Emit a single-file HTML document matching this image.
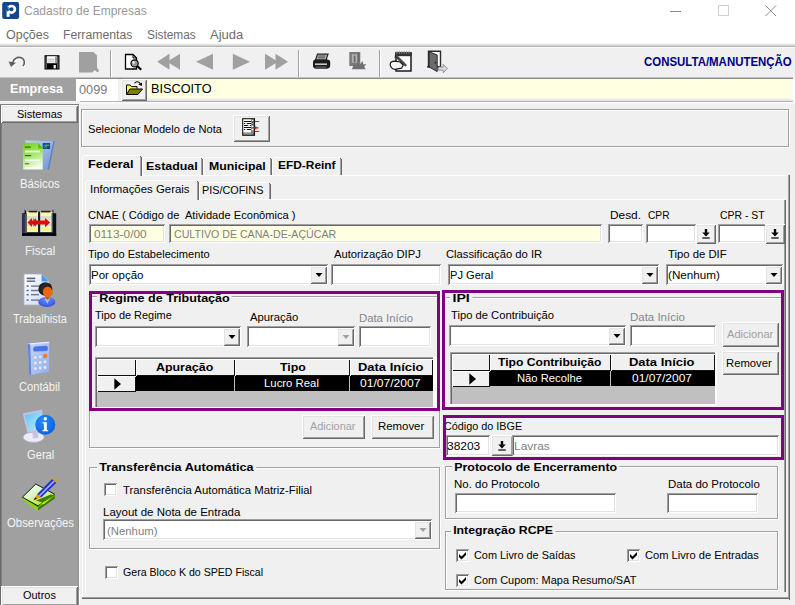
<!DOCTYPE html>
<html><head><meta charset="utf-8"><title>Cadastro de Empresas</title>
<style>
html,body{margin:0;padding:0;}
body{width:795px;height:605px;overflow:hidden;background:#f0f0f0;font-family:"Liberation Sans", sans-serif;font-size:11px;position:relative;}
#w{position:absolute;left:0;top:0;width:795px;height:605px;overflow:hidden;}
#w div,#w span,#w svg{position:absolute;display:block;}
#w span{white-space:pre;line-height:normal;transform-origin:0 0;}
</style></head><body><div id="w">
<div style="left:0px;top:0px;width:795px;height:45px;background:#fff"></div>
<svg style="left:2px;top:2px" width="18" height="18" viewBox="0 0 18 18"><rect x=".2" y=".1" width="16.900" height="17" rx="2" fill="#12488a"/><circle cx="9.600" cy="7.300" r="3.300" fill="none" stroke="#fff" stroke-width="2.700"/><rect x="4.600" y="7.600" width="3" height="7.200" fill="#fff"/><path d="M2.500 1.500L9 7.500 5 9.500z" fill="#12488a"/><path d="M4.400 3.200c1.200.6 2.600 2 3.200 4l-1.600.4c-.2-1.800-.8-3.200-1.600-4.400z" fill="#35a7f0"/></svg>
<span style="left:24.43px;top:3.03px;font-size:13px;color:#999;transform:scaleX(0.923);">Cadastro de Empresas</span>
<div style="left:670px;top:11px;width:11px;height:1px;background:#8a8a8a"></div>
<div style="left:718px;top:5px;width:11px;height:11px;border:1px solid #d0d0d0;box-sizing:border-box"></div>
<svg style="left:765px;top:5px" width="12" height="12" viewBox="0 0 12 12"><path d="M0.5 0.5L11 11M11 0.5L0.5 11" stroke="#8a8a8a" stroke-width="1" fill="none"/></svg>
<span style="left:6.47px;top:27.55px;font-size:12px;color:#6d6d6d;transform:scaleX(1.039);">Opções</span>
<span style="left:63.00px;top:27.55px;font-size:12px;color:#6d6d6d;transform:scaleX(1.019);">Ferramentas</span>
<span style="left:146.75px;top:27.55px;font-size:12px;color:#6d6d6d;transform:scaleX(0.988);">Sistemas</span>
<span style="left:209.86px;top:27.55px;font-size:12px;color:#6d6d6d;transform:scaleX(1.084);">Ajuda</span>
<div style="left:0px;top:43px;width:795px;height:1px;background:#f6f6f6"></div>
<div style="left:0px;top:44px;width:795px;height:1px;background:#e6e6e6"></div>
<div style="left:0px;top:45px;width:795px;height:1px;background:#d0d0d0"></div>
<div style="left:0px;top:46px;width:795px;height:1px;background:#b4b4b4"></div>
<div style="left:0px;top:47px;width:795px;height:1px;background:#fafafa"></div>
<div style="left:0px;top:77px;width:795px;height:1px;background:#c4c4c4"></div>
<div style="left:0px;top:78px;width:795px;height:1px;background:#8c8c8c"></div>
<div style="left:110px;top:50px;width:1px;height:27px;background:#a0a0a0"></div>
<div style="left:111px;top:50px;width:1px;height:27px;background:#fff"></div>
<div style="left:298px;top:50px;width:1px;height:27px;background:#a0a0a0"></div>
<div style="left:299px;top:50px;width:1px;height:27px;background:#fff"></div>
<div style="left:379px;top:50px;width:1px;height:27px;background:#a0a0a0"></div>
<div style="left:380px;top:50px;width:1px;height:27px;background:#fff"></div>
<span style="left:643.61px;top:54.95px;font-size:12px;color:#000080;font-weight:bold;transform:scaleX(0.954);">CONSULTA/MANUTENÇÃO</span>
<div style="left:0px;top:78px;width:77px;height:23px;background:#a0a0a0"></div>
<span style="left:9.75px;top:82.09px;font-size:12.5px;color:#fff;font-weight:bold;transform:scaleX(1.005);">Empresa</span>
<div style="left:76px;top:79px;width:42px;height:22px;background:#fff"></div>
<span style="left:78.54px;top:81.63px;font-size:13px;color:#7b7b7b;transform:scaleX(0.980);">0099</span>
<div style="left:121px;top:79px;width:26px;height:22px;background:#f0f0f0;box-shadow:inset 1px 1px 0 #ffffff,inset -1px -1px 0 #696969,inset 2px 2px 0 #e3e3e3,inset -2px -2px 0 #a0a0a0"></div>
<div style="left:147px;top:79px;width:644px;height:19px;background:#ffffe1"></div>
<div style="left:147px;top:98px;width:646px;height:1px;background:#f2f2ea"></div>
<div style="left:147px;top:99px;width:646px;height:1px;background:#ececec"></div>
<div style="left:147px;top:100px;width:646px;height:1px;background:#e4e4e4"></div>
<div style="left:791px;top:79px;width:2px;height:21px;background:#fafafa"></div>
<div style="left:80px;top:101px;width:715px;height:1px;background:#b4b4b4"></div>
<div style="left:80px;top:102px;width:715px;height:1px;background:#fafafa"></div>
<div style="left:80px;top:103px;width:715px;height:1px;background:#f6f6f6"></div>
<div style="left:793px;top:77px;width:2px;height:25px;background:#fff"></div>
<span style="left:151.00px;top:81.33px;font-size:13px;color:#000;transform:scaleX(0.978);">BISCOITO</span>
<div style="left:0px;top:104px;width:1px;height:501px;background:#696969"></div>
<div style="left:1px;top:104px;width:1px;height:501px;background:#808080"></div>
<div style="left:2px;top:104px;width:76px;height:501px;background:#a0a0a0"></div>
<div style="left:78px;top:104px;width:1px;height:501px;background:#909090"></div>
<div style="left:79px;top:104px;width:1px;height:501px;background:#fff"></div>
<div style="left:0px;top:104px;width:79px;height:1px;background:#808080"></div>
<div style="left:1px;top:105px;width:77px;height:18px;background:#f0f0f0;box-shadow:inset 1px 1px 0 #ffffff,inset -1px -1px 0 #696969,inset 2px 2px 0 #e3e3e3,inset -2px -2px 0 #a0a0a0"></div>
<span style="left:16.84px;top:107.81px;font-size:11.5px;color:#000;transform:scaleX(0.958);">Sistemas</span>
<div style="left:1px;top:586px;width:77px;height:20px;background:#f0f0f0;box-shadow:inset 1px 1px 0 #ffffff,inset -1px -1px 0 #696969,inset 2px 2px 0 #e3e3e3,inset -2px -2px 0 #a0a0a0"></div>
<span style="left:23.34px;top:589.11px;font-size:11.5px;color:#000;transform:scaleX(0.952);">Outros</span>
<span style="left:20.00px;top:176.95px;font-size:12px;color:#f4f4f4;transform:scaleX(0.944);">Básicos</span>
<span style="left:24.80px;top:244.45px;font-size:12px;color:#f4f4f4;transform:scaleX(0.967);">Fiscal</span>
<span style="left:12.87px;top:312.35px;font-size:12px;color:#f4f4f4;transform:scaleX(0.916);">Trabalhista</span>
<span style="left:19.30px;top:380.25px;font-size:12px;color:#f4f4f4;transform:scaleX(0.930);">Contábil</span>
<span style="left:26.89px;top:448.25px;font-size:12px;color:#f4f4f4;transform:scaleX(0.930);">Geral</span>
<span style="left:6.51px;top:515.65px;font-size:12px;color:#f4f4f4;transform:scaleX(0.948);">Observações</span>
<div style="left:81px;top:109px;width:708px;height:38px;border:1px solid #a0a0a0;box-shadow:inset 1px 1px 0 #ffffff,1px 1px 0 #ffffff;box-sizing:border-box"></div>
<span style="left:88.13px;top:123.07px;font-size:11px;color:#000;transform:scaleX(1.009);">Selecionar Modelo de Nota</span>
<div style="left:233px;top:115px;width:37px;height:27px;background:#f0f0f0;box-shadow:inset 1px 1px 0 #ffffff,inset -1px -1px 0 #696969,inset 2px 2px 0 #e3e3e3,inset -2px -2px 0 #a0a0a0"></div>
<div style="left:82px;top:175px;width:707px;height:1px;background:#ffffff"></div>
<div style="left:82px;top:175px;width:1px;height:423px;background:#ffffff"></div>
<div style="left:788px;top:175px;width:1px;height:424px;background:#a0a0a0"></div>
<div style="left:789px;top:175px;width:1px;height:425px;background:#696969"></div>
<div style="left:82px;top:597px;width:707px;height:1px;background:#a0a0a0"></div>
<div style="left:82px;top:598px;width:708px;height:1px;background:#696969"></div>
<div style="left:142px;top:159px;width:1px;height:16px;background:#ffffff"></div>
<div style="left:144px;top:157px;width:57px;height:1px;background:#ffffff"></div>
<div style="left:143px;top:158px;width:1px;height:1px;background:#ffffff"></div>
<div style="left:201px;top:159px;width:1px;height:16px;background:#a0a0a0"></div>
<div style="left:202px;top:159px;width:1px;height:16px;background:#696969"></div>
<div style="left:201px;top:158px;width:1px;height:1px;background:#696969"></div>
<div style="left:203px;top:159px;width:1px;height:16px;background:#ffffff"></div>
<div style="left:205px;top:157px;width:65px;height:1px;background:#ffffff"></div>
<div style="left:204px;top:158px;width:1px;height:1px;background:#ffffff"></div>
<div style="left:270px;top:159px;width:1px;height:16px;background:#a0a0a0"></div>
<div style="left:271px;top:159px;width:1px;height:16px;background:#696969"></div>
<div style="left:270px;top:158px;width:1px;height:1px;background:#696969"></div>
<div style="left:272px;top:159px;width:1px;height:16px;background:#ffffff"></div>
<div style="left:274px;top:157px;width:66px;height:1px;background:#ffffff"></div>
<div style="left:273px;top:158px;width:1px;height:1px;background:#ffffff"></div>
<div style="left:340px;top:159px;width:1px;height:16px;background:#a0a0a0"></div>
<div style="left:341px;top:159px;width:1px;height:16px;background:#696969"></div>
<div style="left:340px;top:158px;width:1px;height:1px;background:#696969"></div>
<div style="left:82px;top:157px;width:1px;height:19px;background:#ffffff"></div>
<div style="left:84px;top:155px;width:56px;height:1px;background:#ffffff"></div>
<div style="left:83px;top:156px;width:1px;height:1px;background:#ffffff"></div>
<div style="left:140px;top:157px;width:1px;height:19px;background:#a0a0a0"></div>
<div style="left:141px;top:157px;width:1px;height:19px;background:#696969"></div>
<div style="left:140px;top:156px;width:1px;height:1px;background:#696969"></div>
<div style="left:83px;top:175px;width:57px;height:2px;background:#f0f0f0"></div>
<span style="left:88.45px;top:157.59px;font-size:11.3px;color:#000;font-weight:bold;transform:scaleX(1.131);">Federal</span>
<span style="left:145.96px;top:159.59px;font-size:11.3px;color:#000;font-weight:bold;transform:scaleX(1.098);">Estadual</span>
<span style="left:209.27px;top:159.59px;font-size:11.3px;color:#000;font-weight:bold;transform:scaleX(1.088);">Municipal</span>
<span style="left:277.60px;top:159.29px;font-size:11.3px;color:#000;font-weight:bold;transform:scaleX(1.054);">EFD-Reinf</span>
<div style="left:85px;top:199px;width:700px;height:1px;background:#ffffff"></div>
<div style="left:85px;top:199px;width:1px;height:393px;background:#ffffff"></div>
<div style="left:784px;top:200px;width:1px;height:392px;background:#a0a0a0"></div>
<div style="left:785px;top:200px;width:1px;height:392px;background:#696969"></div>
<div style="left:199px;top:184px;width:1px;height:15px;background:#ffffff"></div>
<div style="left:201px;top:182px;width:68px;height:1px;background:#ffffff"></div>
<div style="left:200px;top:183px;width:1px;height:1px;background:#ffffff"></div>
<div style="left:269px;top:184px;width:1px;height:15px;background:#a0a0a0"></div>
<div style="left:270px;top:184px;width:1px;height:15px;background:#696969"></div>
<div style="left:269px;top:183px;width:1px;height:1px;background:#696969"></div>
<div style="left:85px;top:182px;width:1px;height:18px;background:#ffffff"></div>
<div style="left:87px;top:180px;width:110px;height:1px;background:#ffffff"></div>
<div style="left:86px;top:181px;width:1px;height:1px;background:#ffffff"></div>
<div style="left:197px;top:182px;width:1px;height:18px;background:#a0a0a0"></div>
<div style="left:198px;top:182px;width:1px;height:18px;background:#696969"></div>
<div style="left:197px;top:181px;width:1px;height:1px;background:#696969"></div>
<div style="left:86px;top:199px;width:111px;height:2px;background:#f0f0f0"></div>
<span style="left:90.46px;top:182.67px;font-size:11px;color:#000;transform:scaleX(1.037);">Informações Gerais</span>
<span style="left:202.02px;top:184.47px;font-size:11px;color:#000;transform:scaleX(0.984);">PIS/COFINS</span>
<span style="left:88.27px;top:208.87px;font-size:11px;color:#000;transform:scaleX(1.010);">CNAE ( Código de  Atividade Econômica )</span>
<div style="left:89px;top:224px;width:76px;height:19px;background:#ffffe1;box-shadow:inset 1px 1px 0 #a0a0a0,inset -1px -1px 0 #ffffff,inset 2px 2px 0 #696969,inset -2px -2px 0 #e3e3e3"></div>
<span style="left:93.53px;top:227.67px;font-size:11px;color:#808080;transform:scaleX(1.081);">0113-0/00</span>
<div style="left:169px;top:224px;width:433px;height:19px;background:#ffffe1;box-shadow:inset 1px 1px 0 #a0a0a0,inset -1px -1px 0 #ffffff,inset 2px 2px 0 #696969,inset -2px -2px 0 #e3e3e3"></div>
<span style="left:173.90px;top:227.67px;font-size:11px;color:#808080;transform:scaleX(0.966);">CULTIVO DE CANA-DE-AÇÚCAR</span>
<span style="left:609.60px;top:208.87px;font-size:11px;color:#000;transform:scaleX(1.078);">Desd.</span>
<span style="left:648.13px;top:208.87px;font-size:11px;color:#000;transform:scaleX(0.927);">CPR</span>
<span style="left:720.31px;top:208.87px;font-size:11px;color:#000;transform:scaleX(0.949);">CPR - ST</span>
<div style="left:608px;top:224px;width:35px;height:19px;background:#fff;box-shadow:inset 1px 1px 0 #a0a0a0,inset -1px -1px 0 #ffffff,inset 2px 2px 0 #696969,inset -2px -2px 0 #e3e3e3"></div>
<div style="left:646px;top:224px;width:50px;height:19px;background:#fff;box-shadow:inset 1px 1px 0 #a0a0a0,inset -1px -1px 0 #ffffff,inset 2px 2px 0 #696969,inset -2px -2px 0 #e3e3e3"></div>
<div style="left:696px;top:224px;width:20px;height:20px;background:#f0f0f0;box-shadow:inset 1px 1px 0 #ffffff,inset -1px -1px 0 #696969,inset 2px 2px 0 #e3e3e3,inset -2px -2px 0 #a0a0a0"></div>
<div style="left:718px;top:224px;width:48px;height:19px;background:#fff;box-shadow:inset 1px 1px 0 #a0a0a0,inset -1px -1px 0 #ffffff,inset 2px 2px 0 #696969,inset -2px -2px 0 #e3e3e3"></div>
<div style="left:765px;top:224px;width:20px;height:20px;background:#f0f0f0;box-shadow:inset 1px 1px 0 #ffffff,inset -1px -1px 0 #696969,inset 2px 2px 0 #e3e3e3,inset -2px -2px 0 #a0a0a0"></div>
<svg style="left:701px;top:227.5px" width="10" height="12" viewBox="0 0 10 12"><path d="M3.800 1h2.400v3.600h2.500L5 8.400 1.300 4.600h2.500z" fill="#000"/><rect x="1.300" y="9.400" width="7.400" height="1.200" fill="#000"/></svg>
<svg style="left:770px;top:227.5px" width="10" height="12" viewBox="0 0 10 12"><path d="M3.800 1h2.400v3.600h2.500L5 8.400 1.300 4.600h2.500z" fill="#000"/><rect x="1.300" y="9.400" width="7.400" height="1.200" fill="#000"/></svg>
<span style="left:88.44px;top:247.77px;font-size:11px;color:#000;transform:scaleX(1.008);">Tipo do Estabelecimento</span>
<span style="left:333.86px;top:247.77px;font-size:11px;color:#000;transform:scaleX(1.021);">Autorização DIPJ</span>
<span style="left:446.47px;top:247.77px;font-size:11px;color:#000;transform:scaleX(1.022);">Classificação do IR</span>
<span style="left:667.64px;top:247.87px;font-size:11px;color:#000;transform:scaleX(1.028);">Tipo de DIF</span>
<div style="left:89px;top:264px;width:239px;height:21px;background:#fff;box-shadow:inset 1px 1px 0 #a0a0a0,inset -1px -1px 0 #ffffff,inset 2px 2px 0 #696969,inset -2px -2px 0 #e3e3e3"></div>
<div style="left:310px;top:266px;width:17px;height:18px;background:#f0f0f0;box-shadow:inset 1px 1px 0 #ffffff,inset -1px -1px 0 #696969,inset 2px 2px 0 #e3e3e3,inset -2px -2px 0 #a0a0a0"></div>
<svg style="left:310.5px;top:267.0px" width="16" height="16" viewBox="310.5 267.0 16 16"><polygon points="315.0,273.0 322.0,273.0 318.5,277.0" fill="#000"/></svg>
<span style="left:91.00px;top:269.17px;font-size:11px;color:#000;transform:scaleX(1.046);">Por opção</span>
<div style="left:331px;top:264px;width:110px;height:21px;background:#fff;box-shadow:inset 1px 1px 0 #a0a0a0,inset -1px -1px 0 #ffffff,inset 2px 2px 0 #696969,inset -2px -2px 0 #e3e3e3"></div>
<div style="left:448px;top:264px;width:211px;height:21px;background:#fff;box-shadow:inset 1px 1px 0 #a0a0a0,inset -1px -1px 0 #ffffff,inset 2px 2px 0 #696969,inset -2px -2px 0 #e3e3e3"></div>
<div style="left:641px;top:266px;width:17px;height:18px;background:#f0f0f0;box-shadow:inset 1px 1px 0 #ffffff,inset -1px -1px 0 #696969,inset 2px 2px 0 #e3e3e3,inset -2px -2px 0 #a0a0a0"></div>
<svg style="left:641.5px;top:267.0px" width="16" height="16" viewBox="641.5 267.0 16 16"><polygon points="646.0,273.0 653.0,273.0 649.5,277.0" fill="#000"/></svg>
<span style="left:450.40px;top:269.17px;font-size:11px;color:#000;transform:scaleX(1.008);">PJ Geral</span>
<div style="left:666px;top:264px;width:117px;height:21px;background:#fff;box-shadow:inset 1px 1px 0 #a0a0a0,inset -1px -1px 0 #ffffff,inset 2px 2px 0 #696969,inset -2px -2px 0 #e3e3e3"></div>
<div style="left:765px;top:266px;width:17px;height:18px;background:#f0f0f0;box-shadow:inset 1px 1px 0 #ffffff,inset -1px -1px 0 #696969,inset 2px 2px 0 #e3e3e3,inset -2px -2px 0 #a0a0a0"></div>
<svg style="left:765.5px;top:267.0px" width="16" height="16" viewBox="765.5 267.0 16 16"><polygon points="770.0,273.0 777.0,273.0 773.5,277.0" fill="#000"/></svg>
<span style="left:668.30px;top:268.87px;font-size:11px;color:#000;transform:scaleX(1.061);">(Nenhum)</span>
<div style="left:92px;top:296px;width:345px;height:1px;background:#a0a0a0"></div>
<div style="left:93px;top:297px;width:344px;height:1px;background:#ffffff"></div>
<span style="left:98.86px;top:292.19px;font-size:11.3px;color:#000;font-weight:bold;transform:scaleX(1.112);background:#f0f0f0;padding:0 2px;margin-left:-2px;">Regime de Tributação</span>
<span style="left:95.24px;top:308.87px;font-size:11px;color:#000;transform:scaleX(0.994);">Tipo de Regime</span>
<span style="left:250.36px;top:310.57px;font-size:11px;color:#000;transform:scaleX(1.026);">Apuração</span>
<span style="left:358.50px;top:312.07px;font-size:11px;color:#85858f;transform:scaleX(1.029);">Data Início</span>
<div style="left:95px;top:326px;width:146px;height:21px;background:#fff;box-shadow:inset 1px 1px 0 #a0a0a0,inset -1px -1px 0 #ffffff,inset 2px 2px 0 #696969,inset -2px -2px 0 #e3e3e3"></div>
<div style="left:223px;top:328px;width:17px;height:18px;background:#f0f0f0;box-shadow:inset 1px 1px 0 #ffffff,inset -1px -1px 0 #696969,inset 2px 2px 0 #e3e3e3,inset -2px -2px 0 #a0a0a0"></div>
<svg style="left:223.5px;top:329.0px" width="16" height="16" viewBox="223.5 329.0 16 16"><polygon points="228.0,335.0 235.0,335.0 231.5,339.0" fill="#000"/></svg>
<div style="left:247px;top:326px;width:108px;height:21px;background:#fff;box-shadow:inset 1px 1px 0 #a0a0a0,inset -1px -1px 0 #ffffff,inset 2px 2px 0 #696969,inset -2px -2px 0 #e3e3e3"></div>
<div style="left:337px;top:328px;width:17px;height:18px;background:#f0f0f0;box-shadow:inset 1px 1px 0 #ffffff,inset -1px -1px 0 #696969,inset 2px 2px 0 #e3e3e3,inset -2px -2px 0 #a0a0a0"></div>
<svg style="left:337.5px;top:329.0px" width="16" height="16" viewBox="337.5 329.0 16 16"><polygon points="342.0,335.0 349.0,335.0 345.5,339.0" fill="#a0a0a0"/></svg>
<div style="left:359px;top:326px;width:72px;height:21px;background:#fff;box-shadow:inset 1px 1px 0 #a0a0a0,inset -1px -1px 0 #ffffff,inset 2px 2px 0 #696969,inset -2px -2px 0 #e3e3e3"></div>
<div style="left:95px;top:357px;width:338px;height:50px;background:#c0c0c0"></div>
<div style="left:95px;top:357px;width:338px;height:1px;background:#a0a0a0"></div>
<div style="left:95px;top:357px;width:1px;height:50px;background:#a0a0a0"></div>
<div style="left:96px;top:358px;width:337px;height:1px;background:#696969"></div>
<div style="left:96px;top:358px;width:1px;height:49px;background:#696969"></div>
<div style="left:97px;top:359px;width:39px;height:17px;background:#f0f0f0;box-shadow:inset 1px 1px 0 #ffffff,inset -1px -1px 0 #101010"></div>
<div style="left:136px;top:359px;width:99px;height:17px;background:#f0f0f0;box-shadow:inset 1px 1px 0 #ffffff,inset -1px -1px 0 #101010"></div>
<div style="left:235px;top:359px;width:115px;height:17px;background:#f0f0f0;box-shadow:inset 1px 1px 0 #ffffff,inset -1px -1px 0 #101010"></div>
<div style="left:350px;top:359px;width:83px;height:17px;background:#f0f0f0;box-shadow:inset 1px 1px 0 #ffffff,inset -1px -1px 0 #101010"></div>
<div style="left:97px;top:376px;width:39px;height:16px;background:#f0f0f0;box-shadow:inset 1px 1px 0 #ffffff,inset -1px -1px 0 #101010"></div>
<div style="left:136px;top:376px;width:297px;height:16px;background:#000"></div>
<div style="left:234px;top:376px;width:1px;height:15px;background:#c0c0c0"></div>
<div style="left:349px;top:376px;width:1px;height:15px;background:#c0c0c0"></div>
<div style="left:136px;top:391px;width:297px;height:1px;background:#c0c0c0"></div>
<svg style="left:112.0px;top:376.7px" width="12" height="14" viewBox="0 0 12 14"><polygon points="2.300,1.200 2.300,12.800 9,7" fill="#000"/></svg>
<span style="left:156.30px;top:361.39px;font-size:11.3px;color:#000;font-weight:bold;transform:scaleX(1.098);">Apuração</span>
<span style="left:279.69px;top:361.39px;font-size:11.3px;color:#000;font-weight:bold;transform:scaleX(1.094);">Tipo</span>
<span style="left:357.94px;top:361.39px;font-size:11.3px;color:#000;font-weight:bold;transform:scaleX(1.146);">Data Início</span>
<span style="left:263.60px;top:377.47px;font-size:11px;color:#fff;transform:scaleX(1.032);">Lucro Real</span>
<span style="left:360.24px;top:377.47px;font-size:11px;color:#fff;transform:scaleX(1.099);">01/07/2007</span>
<div style="left:433px;top:357px;width:4px;height:51px;background:#fbfbfb"></div>
<div style="left:95px;top:407px;width:342px;height:1px;background:#fbfbfb"></div>
<div style="left:89px;top:291px;width:351px;height:120px;border:3px solid #800080;box-sizing:border-box"></div>
<div style="left:89px;top:411px;width:1px;height:37px;background:#a0a0a0"></div>
<div style="left:90px;top:411px;width:1px;height:36px;background:#ffffff"></div>
<div style="left:89px;top:447px;width:351px;height:1px;background:#a0a0a0"></div>
<div style="left:89px;top:448px;width:352px;height:1px;background:#ffffff"></div>
<div style="left:439px;top:411px;width:1px;height:37px;background:#a0a0a0"></div>
<div style="left:440px;top:411px;width:1px;height:38px;background:#ffffff"></div>
<div style="left:302px;top:415px;width:63px;height:24px;background:#f0f0f0;box-shadow:inset 1px 1px 0 #ffffff,inset -1px -1px 0 #696969,inset 2px 2px 0 #e3e3e3,inset -2px -2px 0 #a0a0a0"></div>
<span style="left:309.86px;top:419.87px;font-size:11px;color:#a0a0a0;transform:scaleX(0.990);">Adicionar</span>
<div style="left:371px;top:415px;width:63px;height:24px;background:#f0f0f0;box-shadow:inset 1px 1px 0 #ffffff,inset -1px -1px 0 #696969,inset 2px 2px 0 #e3e3e3,inset -2px -2px 0 #a0a0a0"></div>
<span style="left:377.80px;top:419.87px;font-size:11px;color:#000;transform:scaleX(1.036);">Remover</span>
<div style="left:446px;top:297px;width:335px;height:1px;background:#a0a0a0"></div>
<div style="left:447px;top:298px;width:334px;height:1px;background:#ffffff"></div>
<span style="left:452.00px;top:291.59px;font-size:11.3px;color:#000;font-weight:bold;transform:scaleX(1.250);background:#f0f0f0;padding:0 2px;margin-left:-2px;">IPI</span>
<span style="left:451.04px;top:308.87px;font-size:11px;color:#000;transform:scaleX(1.019);">Tipo de Contribuição</span>
<span style="left:629.70px;top:311.37px;font-size:11px;color:#85858f;transform:scaleX(1.043);">Data Início</span>
<div style="left:449px;top:325px;width:177px;height:21px;background:#fff;box-shadow:inset 1px 1px 0 #a0a0a0,inset -1px -1px 0 #ffffff,inset 2px 2px 0 #696969,inset -2px -2px 0 #e3e3e3"></div>
<div style="left:608px;top:327px;width:17px;height:18px;background:#f0f0f0;box-shadow:inset 1px 1px 0 #ffffff,inset -1px -1px 0 #696969,inset 2px 2px 0 #e3e3e3,inset -2px -2px 0 #a0a0a0"></div>
<svg style="left:608.5px;top:328.0px" width="16" height="16" viewBox="608.5 328.0 16 16"><polygon points="613.0,334.0 620.0,334.0 616.5,338.0" fill="#000"/></svg>
<div style="left:630px;top:325px;width:86px;height:21px;background:#fff;box-shadow:inset 1px 1px 0 #a0a0a0,inset -1px -1px 0 #ffffff,inset 2px 2px 0 #696969,inset -2px -2px 0 #e3e3e3"></div>
<div style="left:722px;top:322px;width:57px;height:25px;background:#f0f0f0;box-shadow:inset 1px 1px 0 #ffffff,inset -1px -1px 0 #696969,inset 2px 2px 0 #e3e3e3,inset -2px -2px 0 #a0a0a0"></div>
<span style="left:726.86px;top:328.17px;font-size:11px;color:#a0a0a0;transform:scaleX(1.010);">Adicionar</span>
<div style="left:722px;top:351px;width:57px;height:24px;background:#f0f0f0;box-shadow:inset 1px 1px 0 #ffffff,inset -1px -1px 0 #696969,inset 2px 2px 0 #e3e3e3,inset -2px -2px 0 #a0a0a0"></div>
<span style="left:726.00px;top:356.67px;font-size:11px;color:#000;transform:scaleX(1.025);">Remover</span>
<div style="left:450px;top:352px;width:265px;height:52px;background:#c0c0c0"></div>
<div style="left:450px;top:352px;width:265px;height:1px;background:#a0a0a0"></div>
<div style="left:450px;top:352px;width:1px;height:52px;background:#a0a0a0"></div>
<div style="left:451px;top:353px;width:264px;height:1px;background:#696969"></div>
<div style="left:451px;top:353px;width:1px;height:51px;background:#696969"></div>
<div style="left:452px;top:354px;width:38px;height:17px;background:#f0f0f0;box-shadow:inset 1px 1px 0 #ffffff,inset -1px -1px 0 #101010"></div>
<div style="left:490px;top:354px;width:121px;height:17px;background:#f0f0f0;box-shadow:inset 1px 1px 0 #ffffff,inset -1px -1px 0 #101010"></div>
<div style="left:611px;top:354px;width:104px;height:17px;background:#f0f0f0;box-shadow:inset 1px 1px 0 #ffffff,inset -1px -1px 0 #101010"></div>
<div style="left:452px;top:371px;width:38px;height:16px;background:#f0f0f0;box-shadow:inset 1px 1px 0 #ffffff,inset -1px -1px 0 #101010"></div>
<div style="left:490px;top:371px;width:225px;height:16px;background:#000"></div>
<div style="left:610px;top:371px;width:1px;height:15px;background:#c0c0c0"></div>
<div style="left:490px;top:386px;width:225px;height:1px;background:#c0c0c0"></div>
<svg style="left:466.5px;top:371.7px" width="12" height="14" viewBox="0 0 12 14"><polygon points="2.300,1.200 2.300,12.800 9,7" fill="#000"/></svg>
<span style="left:498.39px;top:356.39px;font-size:11.3px;color:#000;font-weight:bold;transform:scaleX(1.073);">Tipo Contribuição</span>
<span style="left:629.25px;top:356.39px;font-size:11.3px;color:#000;font-weight:bold;transform:scaleX(1.146);">Data Início</span>
<span style="left:516.50px;top:372.47px;font-size:11px;color:#fff;transform:scaleX(1.020);">Não Recolhe</span>
<span style="left:632.24px;top:372.47px;font-size:11px;color:#fff;transform:scaleX(1.089);">01/07/2007</span>
<div style="left:715px;top:352px;width:2px;height:53px;background:#fbfbfb"></div>
<div style="left:450px;top:404px;width:267px;height:2px;background:#fbfbfb"></div>
<div style="left:442px;top:290px;width:342px;height:120px;border:3px solid #800080;box-sizing:border-box"></div>
<span style="left:443.50px;top:419.57px;font-size:11px;color:#000;transform:scaleX(0.984);">Código do IBGE</span>
<div style="left:446px;top:435px;width:44px;height:21px;background:#fff;box-shadow:inset 1px 1px 0 #a0a0a0,inset -1px -1px 0 #ffffff,inset 2px 2px 0 #696969,inset -2px -2px 0 #e3e3e3"></div>
<span style="left:447.40px;top:439.67px;font-size:11px;color:#000;transform:scaleX(1.087);">38203</span>
<div style="left:491px;top:435px;width:22px;height:21px;background:#f0f0f0;box-shadow:inset 1px 1px 0 #ffffff,inset -1px -1px 0 #696969,inset 2px 2px 0 #e3e3e3,inset -2px -2px 0 #a0a0a0"></div>
<svg style="left:497px;top:439.5px" width="10" height="12" viewBox="0 0 10 12"><path d="M3.800 1h2.400v3.600h2.500L5 8.400 1.300 4.600h2.500z" fill="#000"/><rect x="1.300" y="9.400" width="7.400" height="1.200" fill="#000"/></svg>
<div style="left:512px;top:435px;width:267px;height:21px;background:#fff;box-shadow:inset 1px 1px 0 #a0a0a0,inset -1px -1px 0 #ffffff,inset 2px 2px 0 #696969,inset -2px -2px 0 #e3e3e3"></div>
<span style="left:514.00px;top:439.67px;font-size:11px;color:#808080;transform:scaleX(1.085);">Lavras</span>
<div style="left:443px;top:415px;width:341px;height:45px;border:3px solid #800080;box-sizing:border-box"></div>
<div style="left:89px;top:467px;width:351px;height:1px;background:#a0a0a0"></div>
<div style="left:90px;top:468px;width:350px;height:1px;background:#ffffff"></div>
<div style="left:89px;top:467px;width:1px;height:82px;background:#a0a0a0"></div>
<div style="left:90px;top:468px;width:1px;height:80px;background:#ffffff"></div>
<div style="left:439px;top:467px;width:1px;height:82px;background:#a0a0a0"></div>
<div style="left:440px;top:467px;width:1px;height:83px;background:#ffffff"></div>
<div style="left:89px;top:548px;width:351px;height:1px;background:#a0a0a0"></div>
<div style="left:89px;top:549px;width:352px;height:1px;background:#ffffff"></div>
<span style="left:99.00px;top:460.99px;font-size:11.3px;color:#000;font-weight:bold;transform:scaleX(1.121);background:#f0f0f0;padding:0 2px;margin-left:-2px;">Transferência Automática</span>
<div style="left:104px;top:483px;width:13px;height:13px;background:#fff;box-shadow:inset 1px 1px 0 #a0a0a0,inset -1px -1px 0 #ffffff,inset 2px 2px 0 #696969,inset -2px -2px 0 #e3e3e3"></div>
<span style="left:123.24px;top:483.67px;font-size:11px;color:#000;transform:scaleX(1.030);">Transferência Automática Matriz-Filial</span>
<span style="left:102.60px;top:505.77px;font-size:11px;color:#000;transform:scaleX(1.045);">Layout de Nota de Entrada</span>
<div style="left:103px;top:519px;width:329px;height:21px;background:#fff;box-shadow:inset 1px 1px 0 #a0a0a0,inset -1px -1px 0 #ffffff,inset 2px 2px 0 #696969,inset -2px -2px 0 #e3e3e3"></div>
<div style="left:414px;top:521px;width:17px;height:18px;background:#f0f0f0;box-shadow:inset 1px 1px 0 #ffffff,inset -1px -1px 0 #696969,inset 2px 2px 0 #e3e3e3,inset -2px -2px 0 #a0a0a0"></div>
<svg style="left:414.5px;top:522.0px" width="16" height="16" viewBox="414.5 522.0 16 16"><polygon points="419.0,528.0 426.0,528.0 422.5,532.0" fill="#a0a0a0"/></svg>
<span style="left:107.02px;top:525.37px;font-size:11px;color:#808080;transform:scaleX(1.032);">(Nenhum)</span>
<div style="left:105px;top:566px;width:13px;height:13px;background:#fff;box-shadow:inset 1px 1px 0 #a0a0a0,inset -1px -1px 0 #ffffff,inset 2px 2px 0 #696969,inset -2px -2px 0 #e3e3e3"></div>
<span style="left:123.11px;top:565.77px;font-size:11px;color:#000;transform:scaleX(0.963);">Gera Bloco K do SPED Fiscal</span>
<div style="left:445px;top:466px;width:333px;height:1px;background:#a0a0a0"></div>
<div style="left:446px;top:467px;width:332px;height:1px;background:#ffffff"></div>
<div style="left:445px;top:466px;width:1px;height:53px;background:#a0a0a0"></div>
<div style="left:446px;top:467px;width:1px;height:51px;background:#ffffff"></div>
<div style="left:777px;top:466px;width:1px;height:53px;background:#a0a0a0"></div>
<div style="left:778px;top:466px;width:1px;height:54px;background:#ffffff"></div>
<div style="left:445px;top:518px;width:333px;height:1px;background:#a0a0a0"></div>
<div style="left:445px;top:519px;width:334px;height:1px;background:#ffffff"></div>
<span style="left:453.87px;top:461.29px;font-size:11.3px;color:#000;font-weight:bold;transform:scaleX(1.100);background:#f0f0f0;padding:0 2px;margin-left:-2px;">Protocolo de Encerramento</span>
<span style="left:454.00px;top:477.87px;font-size:11px;color:#000;transform:scaleX(1.044);">No. do Protocolo</span>
<span style="left:667.50px;top:477.87px;font-size:11px;color:#000;transform:scaleX(1.042);">Data do Protocolo</span>
<div style="left:455px;top:493px;width:161px;height:20px;background:#fff;box-shadow:inset 1px 1px 0 #a0a0a0,inset -1px -1px 0 #ffffff,inset 2px 2px 0 #696969,inset -2px -2px 0 #e3e3e3"></div>
<div style="left:667px;top:493px;width:91px;height:20px;background:#fff;box-shadow:inset 1px 1px 0 #a0a0a0,inset -1px -1px 0 #ffffff,inset 2px 2px 0 #696969,inset -2px -2px 0 #e3e3e3"></div>
<div style="left:445px;top:531px;width:333px;height:1px;background:#a0a0a0"></div>
<div style="left:446px;top:532px;width:332px;height:1px;background:#ffffff"></div>
<div style="left:445px;top:531px;width:1px;height:59px;background:#a0a0a0"></div>
<div style="left:446px;top:532px;width:1px;height:57px;background:#ffffff"></div>
<div style="left:777px;top:531px;width:1px;height:59px;background:#a0a0a0"></div>
<div style="left:778px;top:531px;width:1px;height:60px;background:#ffffff"></div>
<div style="left:445px;top:589px;width:333px;height:1px;background:#a0a0a0"></div>
<div style="left:445px;top:590px;width:334px;height:1px;background:#ffffff"></div>
<span style="left:453.17px;top:524.29px;font-size:11.3px;color:#000;font-weight:bold;transform:scaleX(1.089);background:#f0f0f0;padding:0 2px;margin-left:-2px;">Integração RCPE</span>
<div style="left:456px;top:549px;width:13px;height:13px;background:#fff;box-shadow:inset 1px 1px 0 #a0a0a0,inset -1px -1px 0 #ffffff,inset 2px 2px 0 #696969,inset -2px -2px 0 #e3e3e3"></div>
<svg style="left:459px;top:552px" width="7" height="8" viewBox="0 0 7 8"><path d="M0 2v3l2.5 2.500 4.500-4.500v-3l-4.500 4.500z" fill="#000"/></svg>
<span style="left:474.00px;top:548.87px;font-size:11px;color:#000;transform:scaleX(0.988);">Com Livro de Saídas</span>
<div style="left:627px;top:549px;width:13px;height:13px;background:#fff;box-shadow:inset 1px 1px 0 #a0a0a0,inset -1px -1px 0 #ffffff,inset 2px 2px 0 #696969,inset -2px -2px 0 #e3e3e3"></div>
<svg style="left:630px;top:552px" width="7" height="8" viewBox="0 0 7 8"><path d="M0 2v3l2.5 2.500 4.500-4.500v-3l-4.500 4.500z" fill="#000"/></svg>
<span style="left:645.27px;top:548.87px;font-size:11px;color:#000;transform:scaleX(1.012);">Com Livro de Entradas</span>
<div style="left:456px;top:574px;width:13px;height:13px;background:#fff;box-shadow:inset 1px 1px 0 #a0a0a0,inset -1px -1px 0 #ffffff,inset 2px 2px 0 #696969,inset -2px -2px 0 #e3e3e3"></div>
<svg style="left:459px;top:577px" width="7" height="8" viewBox="0 0 7 8"><path d="M0 2v3l2.5 2.500 4.500-4.500v-3l-4.500 4.500z" fill="#000"/></svg>
<span style="left:473.97px;top:574.07px;font-size:11px;color:#000;transform:scaleX(0.996);">Com Cupom: Mapa Resumo/SAT</span>
<svg style="left:7px;top:54px" width="20" height="15" viewBox="0 0 20 15"><path d="M5.800 9.400C6 4.600 10.600 2.600 14.200 3.800C17.600 5 18.400 9 16 12" fill="none" stroke="#fff" stroke-width="1.600" transform="translate(1 1)"/><path d="M2 7.600L8.800 9 4.200 12.800z" fill="#fff" transform="translate(1 1)"/><path d="M5.800 9.400C6 4.600 10.600 2.600 14.200 3.800C17.600 5 18.400 9 16 12" fill="none" stroke="#5e5e5e" stroke-width="1.600"/><path d="M1.600 7.400L9 8.800 4 13z" fill="#5e5e5e"/></svg>
<svg style="left:44px;top:55px" width="16" height="15" viewBox="0 0 16 15"><rect x=".5" y=".2" width="15" height="14.300" fill="#000"/><rect x="3" y="1.400" width="9.600" height="6.800" fill="#ececec"/><rect x="3" y="1.400" width="9.600" height="1.400" fill="#fff"/><rect x="11" y="1.400" width="1.600" height="6.800" fill="#9a9a9a"/><path d="M3.600 4.400h6.600M3.600 6.200h6.600" stroke="#c4c4c4" stroke-width=".8"/><rect x="1.600" y="1.400" width="1.200" height="12" fill="#6e6e6e"/><rect x="13.200" y="1.400" width="1.200" height="12" fill="#6e6e6e"/><rect x="9.600" y="10" width="2.200" height="3.400" fill="#fff"/></svg>
<svg style="left:78px;top:51px" width="23" height="23" viewBox="0 0 23 23"><path d="M1 1h14.5l3.5 3.5v12l2.2 3.4-2 1.4-2.6-2.2-2 2.4H1z" fill="#a0a0a0"/></svg>
<svg style="left:124px;top:53px" width="19" height="18" viewBox="0 0 19 18"><path d="M1.5 1.5h7.5l3.5 3.5v11h-11z" fill="#fff" stroke="#000" stroke-width="1.3"/><path d="M9 1.5v3.5h3.5" fill="none" stroke="#000" stroke-width="1"/><circle cx="10.6" cy="10.4" r="3.6" fill="#9a9a9a" stroke="#000" stroke-width="1.2"/><circle cx="9.6" cy="9.4" r="1.3" fill="#e8e8e8"/><path d="M13.2 13l4 3.8" stroke="#000" stroke-width="2.2"/></svg>
<svg style="left:156px;top:52px" width="26" height="20" viewBox="0 0 26 20"><polygon points="1.2,9.7 13.5,1.7 13.5,17.7" fill="#a0a0a0"/><polygon points="11,9.7 24,1.7 24,17.7" fill="#a0a0a0"/></svg>
<svg style="left:195px;top:52px" width="20" height="20" viewBox="0 0 20 20"><polygon points="1,9.7 18,1.7 18,17.7" fill="#a0a0a0"/></svg>
<svg style="left:232px;top:52px" width="20" height="20" viewBox="0 0 20 20"><polygon points="18,9.7 0.8,1.7 0.8,17.7" fill="#a0a0a0"/></svg>
<svg style="left:264px;top:52px" width="26" height="20" viewBox="0 0 26 20"><polygon points="14,9.7 1,1.7 1,17.7" fill="#a0a0a0"/><polygon points="24,9.7 11.500,1.7 11.500,17.7" fill="#a0a0a0"/></svg>
<svg style="left:312px;top:53px" width="19" height="17" viewBox="0 0 19 17"><path d="M5.5 1.2h10.5l-2 6H3.5z" fill="#b4b4b4" stroke="#222" stroke-width="1.2"/><path d="M6.5 3h7M6 4.8h7" stroke="#444" stroke-width=".9"/><path d="M1 9.2c0-1.6 1.2-2.6 2.8-2.6h11.4c1.8 0 3 .8 3 2.6v3.6c0 1.6-1.6 3-3.4 3H4c-1.6 0-3-1.2-3-2.8z" fill="#1c1c1c"/><rect x="3" y="10.4" width="12" height="1.6" fill="#c8c8c8"/><rect x="3.5" y="13.6" width="11" height="1" fill="#707070"/></svg>
<svg style="left:348px;top:51px" width="19" height="19" viewBox="0 0 19 19"><rect x="1.300" y="1" width="11" height="14" fill="#7a7a7a"/><rect x="3.800" y="3.200" width="5.400" height="8.500" fill="#b0b0b0"/><rect x="5.800" y="4.600" width="1.600" height="6.600" fill="#686868"/><path d="M4 18.200l2-5.600 1.800 2.400 2-4.400 1.800 3.200 3-3.800.6 3.600 3-.6-2 2.800 1.600 2.400z" fill="#707070"/><path d="M10.600 2v9" stroke="#666" stroke-width="1.400"/></svg>
<svg style="left:389px;top:50px" width="25" height="24" viewBox="0 0 25 24"><path d="M7 3.5h15v17.5H7z" fill="#fff" stroke="#1a1a1a" stroke-width="1.5"/><rect x="6.3" y="2" width="16.4" height="4.2" fill="#333"/><path d="M8 1.2v2.6M10.4 1.2v2.6M12.8 1.2v2.6M15.2 1.2v2.6M17.6 1.2v2.6M20 1.2v2.6" stroke="#8a8a8a" stroke-width="1"/><path d="M8.5 5.5l9.5 9.5-1.6 1.8L7 8.2z" fill="#4a4a4a"/><path d="M1.2 14.6c0-2 2-3.4 4.6-3.4l5.4.8 3 3-1.6 3.2-6.6 1.2c-2.6 0-4.8-2.4-4.8-4.8z" fill="#f4f4f4" stroke="#1a1a1a" stroke-width="1.2"/><path d="M6 4.6l2.4 3.2-2.8.4z" fill="#2a2a2a"/></svg>
<svg style="left:426px;top:50px" width="22" height="24" viewBox="0 0 22 24"><path d="M2.5 1.2h12v15.5h-12z" fill="#fff" stroke="#2a2a2a" stroke-width="1.4"/><path d="M3.2 1.8l8 3.2v16.6l-8-4.6z" fill="#6c6c6c" stroke="#2a2a2a" stroke-width="1"/><circle cx="9.4" cy="12.6" r=".9" fill="#222"/><path d="M1 16.8h3" stroke="#2a2a2a" stroke-width="1.4"/><path d="M12.6 17h4.6v-2.6l4.2 4.2-4.2 4.2V20.2h-4.6z" fill="#d8d8d8" stroke="#8c8c8c" stroke-width=".9"/></svg>
<svg style="left:124px;top:80px" width="20" height="17" viewBox="0 0 20 17"><path d="M2.5 14V5h3.6l1.400 1.600h5.500v2" fill="#f6f650" stroke="#000" stroke-width="1"/><path d="M2.500 14.500l3.400-5.500h12.600l-4.600 5.500z" fill="#808000" stroke="#000" stroke-width="1"/><path d="M10.500 3.300c1.600-2.200 4.600-2 6 .6" fill="none" stroke="#000" stroke-width="1.100"/><path d="M14.400 4.600l3.400 1.400.4-3.600z" fill="#000"/></svg>
<svg style="left:241px;top:118px" width="20" height="18" viewBox="0 0 20 18"><rect x="1.700" y=".7" width="11.800" height="16.600" fill="#fff" stroke="#111" stroke-width="1.100"/><rect x="10.300" y="1.200" width="2.800" height="15.600" fill="#4a4a4a"/><rect x="2.200" y="14.600" width="10.800" height="2.200" fill="#4a4a4a"/><rect x="3" y="15.400" width="9" height=".8" fill="#c8c8c8"/><rect x="10.800" y="2" width="1.600" height="1.200" fill="#fff"/><path d="M10.800 5.800l1.600-1.600v1.600z" fill="#fff"/><rect x="10.700" y="7.400" width="1.800" height="1.800" fill="#fff"/><rect x="10.700" y="10.600" width="1.800" height="1.800" fill="#fff"/><rect x="11.400" y="13.400" width="1.200" height="1" fill="#fff"/><path d="M3 3.500h7M3 5.500h7M3 7.500h7M3 9.500h7M3 11.500h7" stroke="#111" stroke-width="1"/><path d="M4 5.500h2M7 7.500h2M4 11.500h2" stroke="#e0d828" stroke-width="1"/><path d="M14 3.500h4.200M14 13.500h4.200" stroke="#f01818" stroke-width="1.200"/><path d="M12.800 9.900l2.400-1.800v1.200h2.200v1.200h-2.200v1.200z" fill="#e80000"/></svg>
<svg style="left:0;top:0" width="0" height="0"><defs><linearGradient id="gGreen" x1="0" y1="0" x2="0.3" y2="1"><stop offset="0" stop-color="#6fd11c"/><stop offset=".55" stop-color="#a6e86a"/><stop offset="1" stop-color="#eefbe0"/></linearGradient><linearGradient id="gBlueP" x1="0" y1="0" x2="1" y2="1"><stop offset="0" stop-color="#c4d6f2"/><stop offset="1" stop-color="#6f93cf"/></linearGradient><linearGradient id="gPage" x1="0" y1="0" x2="1" y2="1"><stop offset="0" stop-color="#ffffff"/><stop offset="1" stop-color="#ccd8f6"/></linearGradient><linearGradient id="gCalc" x1="0" y1="0" x2="1" y2="1"><stop offset="0" stop-color="#c8d8fa"/><stop offset="1" stop-color="#94aeea"/></linearGradient><linearGradient id="gScr" x1="0" y1="0" x2="1" y2="1"><stop offset="0" stop-color="#58c4f8"/><stop offset="1" stop-color="#c4ecfc"/></linearGradient><radialGradient id="gInfo" cx=".4" cy=".35" r=".7"><stop offset="0" stop-color="#2a8cff"/><stop offset="1" stop-color="#0560e0"/></radialGradient><linearGradient id="gPad" x1="0" y1="0" x2=".6" y2="1"><stop offset="0" stop-color="#ffffff"/><stop offset=".55" stop-color="#d8f4c0"/><stop offset="1" stop-color="#b4e810"/></linearGradient><radialGradient id="gBody" cx=".5" cy=".3" r=".8"><stop offset="0" stop-color="#6a8cff"/><stop offset="1" stop-color="#2c48d0"/></radialGradient></defs></svg>
<svg style="left:20px;top:138px" width="38" height="36" viewBox="0 0 38 36"><path d="M4.6 2.4L34.8 3 29 31.6H22z" fill="url(#gBlueP)"/><path d="M34.8 3L29 31.6h-1.4L33.4 3z" fill="#5f7fb8"/><rect x="22.7" y="5" width="7.4" height="6" fill="#1d3fae"/><path d="M23.5 7.4h6M26.2 5.6v4.8M24 9.6l4.4-3" stroke="#38b838" stroke-width=".9"/><path d="M2.7 4.8h15.4l4.6 5.6v21.2H3.2z" fill="url(#gGreen)"/><path d="M18.1 4.8l4.6 5.6h-4.6z" fill="#58c010"/><rect x="5" y="12.6" width="15" height="1.8" fill="#f4fce8"/><rect x="5" y="21.4" width="15" height="1.8" fill="#f8fff0"/><rect x="5" y="29" width="15" height="1.6" fill="#fff"/><rect x="4.8" y="8.6" width="6" height="1.1" fill="#2e5a10"/><rect x="4.8" y="17" width="6.4" height="1.2" fill="#3a6a18"/><rect x="4.8" y="25.2" width="4.4" height="1.1" fill="#4a7a28"/></svg>
<svg style="left:20px;top:207px" width="38" height="31" viewBox="0 0 38 31"><path d="M4.6 2.4l1.8 2v22h-1.8zM33.4 2.4l-1.8 2v22h1.8z" fill="#151515"/><rect x="2" y="6.3" width="34.2" height="22.5" fill="#0c0c1c"/><rect x="2.2" y="7" width="2.6" height="19" fill="#30306a"/><rect x="6.6" y="4.6" width="11.6" height="20.6" fill="#f4f4dc"/><rect x="20" y="4.6" width="12.6" height="20.6" fill="#f4f4dc"/><rect x="7.6" y="5.4" width="9.6" height="2.6" fill="#fafa90"/><rect x="21" y="5.4" width="10" height="2.6" fill="#fafa90"/><rect x="7.6" y="20.6" width="9.6" height="3" fill="#f8f878"/><rect x="21" y="20.6" width="10" height="3" fill="#f8f878"/><path d="M7 10h10.6M7 12h10.6M7 18h10.6M20.6 10h11.4M20.6 12h11.4M20.6 18h11.4" stroke="#b8b8b8" stroke-width=".8"/><rect x="18" y="4.6" width="2.2" height="21" fill="#1a1a3a"/><rect x="8.600" y="3.800" width="8.600" height="1.600" fill="#222"/><rect x="21" y="3.800" width="9.600" height="1.600" fill="#222"/><rect x="4.800" y="7" width="2" height="19" fill="#5c5c44"/><rect x="31.6" y="6" width="1.2" height="19.4" fill="#205050"/><path d="M7.4 15.4l4.6-4.4v2.4h1.4v-2.4l1.6 2v-2l1.6 2.4h8.4V11l5.2 4.6-5.2 4.6v-2.6H16.6l-1.6 2.4v-2l-1.6 2v-2.4H12v2.4z" fill="#e00c0c"/><rect x="2" y="26.6" width="34.2" height="2.2" fill="#050510"/></svg>
<svg style="left:22px;top:272px" width="36" height="36" viewBox="0 0 36 36"><path d="M2.2 2.2h17.4l7.2 7.2v23.4H2.2z" fill="url(#gPage)" stroke="#c4cce0" stroke-width=".6"/><path d="M19.6 2.2l7.2 7.2h-7.2z" fill="#3d9ff2"/><rect x="4.8" y="5.6" width="8.4" height="1.6" fill="#52607e"/><rect x="4.8" y="8.4" width="8.4" height="1.6" fill="#6a7896"/><rect x="4.6" y="13.4" width="2" height="1.4" fill="#52607e"/><rect x="9" y="13.4" width="9" height="1.4" fill="#6a7896"/><rect x="4.6" y="17.8" width="2" height="1.4" fill="#52607e"/><rect x="9" y="17.8" width="8" height="1.4" fill="#6a7896"/><rect x="4.6" y="22" width="2" height="1.4" fill="#52607e"/><rect x="9" y="22" width="8" height="1.4" fill="#6a7896"/><rect x="4.6" y="27.4" width="2" height="1.4" fill="#52607e"/><rect x="9" y="27.4" width="8" height="1.4" fill="#6a7896"/><ellipse cx="24.8" cy="30" rx="8.6" ry="5" fill="url(#gBody)"/><path d="M22.4 25.6l3 6.4 2.8-6.4z" fill="#9ccaf8"/><path d="M23.6 22.6h3.6v4l-1.8 1.2-1.8-1.2z" fill="#c84a06"/><ellipse cx="23.4" cy="17" rx="7" ry="6.8" fill="#1c1c1c"/><ellipse cx="25.6" cy="20" rx="4.7" ry="5.5" fill="#e8660c"/><path d="M18.6 15.6c1.4-5 7.6-6.4 11-2.4-2.6-.8-6.4-.4-8 2.6-1 1.8-1.4 4.6-.6 7-2-1.400-3-4.6-2.400-7.200z" fill="#2a2a2a"/><rect x="29.6" y="18.400" width="1.2" height="4" fill="#b88a10"/></svg>
<svg style="left:26px;top:340px" width="26" height="37" viewBox="0 0 26 37"><path d="M1.800 3.400L23.200 1.800V31.600L3.300 35.200z" fill="url(#gCalc)"/><path d="M1.800 3.400L4.200 3.200L5.200 34.800L3.300 35.200z" fill="#6282d6"/><path d="M1.800 3.400L23.200 1.800V3L4 4.400z" fill="#e4ecfe"/><rect x="7.300" y="6.900" width="14.500" height="5.200" rx="1.800" fill="#4676ea" transform="skewY(-3)" /><g fill="#e2ebfd" stroke="#8aa2e0" stroke-width=".5"><circle cx="9.300" cy="17.500" r="1.900"/><circle cx="14.200" cy="16.800" r="1.900"/><circle cx="9.300" cy="23" r="1.900"/><circle cx="14.200" cy="22.400" r="1.900"/><circle cx="19" cy="21.800" r="1.900"/><circle cx="9.300" cy="28.600" r="1.900"/><circle cx="14.200" cy="28" r="1.900"/><circle cx="19" cy="27.400" r="1.900"/></g><circle cx="19.200" cy="16" r="2.200" fill="#f07c2c"/></svg>
<svg style="left:20px;top:407px" width="38" height="38" viewBox="0 0 38 38"><ellipse cx="13.600" cy="30.200" rx="10.600" ry="5.200" fill="#ececf4" stroke="#a4a4d0" stroke-width=".8"/><path d="M12 22l5 .4 1.600 8.400-5.600.8z" fill="#c4c4e4"/><path d="M2.700 6.500L22.300 2.500 23 23.600 7.400 25.800z" fill="#c2c2e2"/><path d="M4.800 8L20.800 4.800 21.400 22.200 8.600 24z" fill="url(#gScr)"/><circle cx="25.250" cy="17.800" r="10" fill="url(#gInfo)"/><circle cx="25.300" cy="11.800" r="1.700" fill="#fff"/><path d="M22.600 15.200h4.200v7.600l1.400.6v.9h-5.800v-.9l1.500-.6v-6.100l-1.300-.5z" fill="#fff"/></svg>
<svg style="left:20px;top:475px" width="38" height="38" viewBox="0 0 38 38"><path d="M2.400 22.200L18 35.400 34.900 23.600 34.900 19.300 15.800 9z" fill="#3c7a00"/><path d="M2.400 24.800L18 36.400 18 32 2.400 22.200z" fill="#8cd020"/><path d="M2.400 22.200L15.800 9 34.700 19.300 18 30.900z" fill="url(#gPad)" stroke="#1a1a1a" stroke-width="1"/><path d="M18 30.900L34.700 19.300V21.500L18 33z" fill="#5aa000"/><path d="M16 25.400L31 19.600 33.400 20.400 22 27.400z" fill="#3e7c04"/><path d="M20 29.600L30 23 32 22 24 29z" fill="#c8f020"/><path d="M13.600 25.300l3.600-6.400 4 3.600z" fill="#e8a000"/><path d="M13.600 25.300l1.700-3 1.700 1.500z" fill="#111"/><path d="M17.200 18.900L32.200 4 36.400 7.800 21.200 22.500z" fill="#2230d0"/><path d="M18.800 20.200L33.600 5.500 34.800 6.600 20 21.300z" fill="#a8b4f4"/><path d="M32.200 4l1.900-1.600 3.400 3.100-1.100 2.300z" fill="#e8a010"/><circle cx="35" cy="5" r="1" fill="#a0a0a0"/></svg>
</div></body></html>
